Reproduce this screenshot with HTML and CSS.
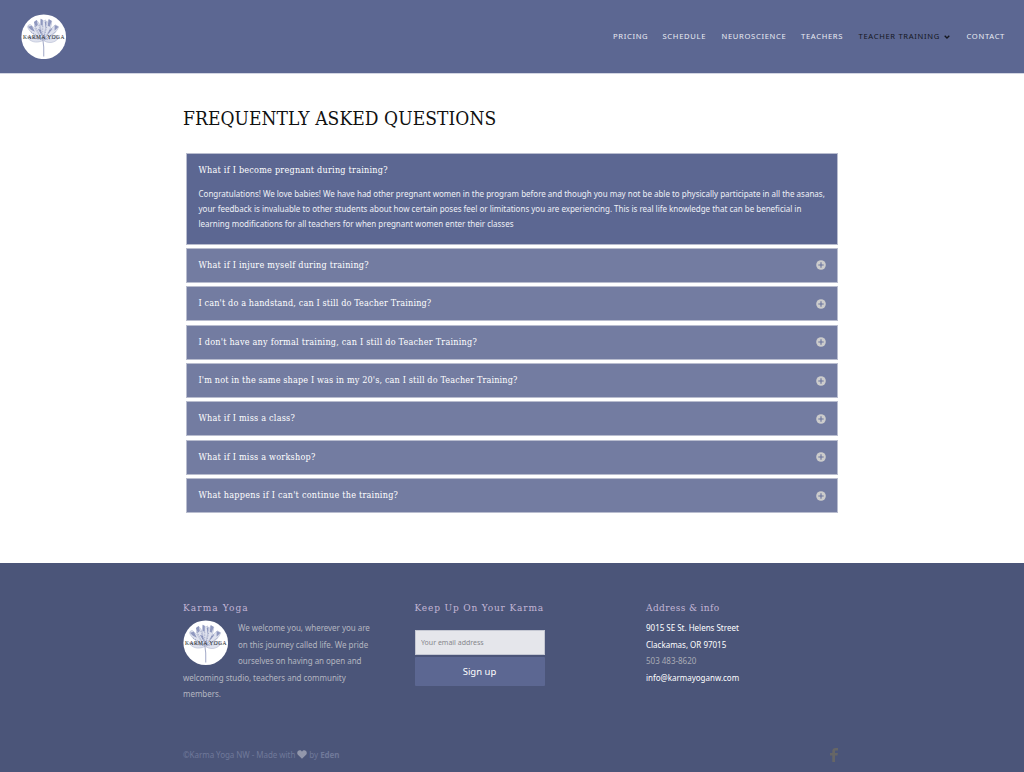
FILE: index.html
```
<!DOCTYPE html>
<html lang="en">
<head>
<meta charset="utf-8">
<title>Frequently Asked Questions - Karma Yoga</title>
<link rel="stylesheet" href="styles.css">
</head>
<body>
<svg class="defs" aria-hidden="true">
  <symbol id="lotus" viewBox="0 0 46 46">
    <circle cx="23" cy="23" r="22.600" fill="#fff"/>
    <g fill="#dfe2ee" stroke="#a6adca" stroke-width=".5">
      <path d="M22 27C16 23 9 19 7 14c-1-2 1-4 3-3 4 4 10 8 12 16z"/>
      <path d="M22 26C17 20 12 13 14 8c1-2 3-1 4 1 2 4 4 10 4 17z"/>
      <path d="M23 26C20 18 19 10 20 5l3 2 2-1c0 6 0 13-2 20z"/>
      <path d="M23 26c1-8 2-16 5-20l3 1c0 6-3 13-8 19z"/>
      <path d="M23 27c3-7 7-13 12-16l3 2c-2 6-8 10-15 14z"/>
      <path d="M22 27C15 30 9 28 6 23c6-1 12 0 16 4z"/>
      <path d="M23 27c5-5 12-7 16-4-3 5-9 8-16 4z"/>
    </g>
    <g fill="#8f98bf">
      <path d="M13 8l3-2 1 5-2 2zM20 5l2 1v6l-2-1zM28 5l3 2-2 6-2-1zM34 11l4 2-4 4zM7 13l4-1 3 6-4-2zM24 8l2-1-1 7zM17 15l3 1 1 6zM29 16l3-1-5 6z"/>
    </g>
    <path d="M14 12l7 13M18 11l4 13M22 12v13M26 13l-3 12M31 14l-7 11M10 18l11 7M35 18L24 26M9 24l12 2M37 24l-13 2" stroke="#717ba8" stroke-width=".5" stroke-dasharray="1.500 1" fill="none"/>
    <path d="M22 25q1.500 8 1 18" stroke="#a6adca" stroke-width="1.100" fill="none"/>
  </symbol>
  <symbol id="plus" viewBox="0 0 10 10">
    <circle cx="5" cy="5" r="4.800" fill="#ccc"/>
    <path d="M5 2.300v5.400M2.300 5h5.400" stroke="#68729c" stroke-width="1.100"/>
  </symbol>
</svg>

<header class="header">
  <svg class="logo" viewBox="0 0 46 46"><use href="#lotus" width="46" height="46"/><text x="2" y="25" textLength="42" class="logo-text">KARMA YOGA</text></svg>
  <nav class="nav">
    <a>PRICING</a><a>SCHEDULE</a><a>NEUROSCIENCE</a><a>TEACHERS</a>
    <a class="active">TEACHER TRAINING<svg class="chevron" viewBox="0 0 6 4"><path d="M.7.7L3 3 5.300.7" fill="none" stroke="currentColor" stroke-width="1.300"/></svg></a>
    <a>CONTACT</a>
  </nav>
</header>

<main class="main">
  <h1 class="title">FREQUENTLY ASKED QUESTIONS</h1>
  <div class="accordion">
    <section class="item open">
      <h2 class="question">What if I become pregnant during training?</h2>
      <p class="answer">Congratulations! We love babies! We have had other pregnant women in the program before and though you may not be able to physically participate in all the asanas,<br>your feedback is invaluable to other students about how certain poses feel or limitations you are experiencing. This is real life knowledge that can be beneficial in<br>learning modifications for all teachers for when pregnant women enter their classes</p>
    </section>
    <section class="item"><h2 class="question">What if I injure myself during training?</h2><svg class="plus"><use href="#plus"/></svg></section>
    <section class="item"><h2 class="question tight">I can't do a handstand, can I still do Teacher Training?</h2><svg class="plus"><use href="#plus"/></svg></section>
    <section class="item"><h2 class="question">I don't have any formal training, can I still do Teacher Training?</h2><svg class="plus"><use href="#plus"/></svg></section>
    <section class="item"><h2 class="question tight">I'm not in the same shape I was in my 20's, can I still do Teacher Training?</h2><svg class="plus"><use href="#plus"/></svg></section>
    <section class="item"><h2 class="question">What if I miss a class?</h2><svg class="plus"><use href="#plus"/></svg></section>
    <section class="item"><h2 class="question">What if I miss a workshop?</h2><svg class="plus"><use href="#plus"/></svg></section>
    <section class="item"><h2 class="question">What happens if I can't continue the training?</h2><svg class="plus"><use href="#plus"/></svg></section>
  </div>
</main>

<footer class="footer">
  <div class="columns">
    <div class="column">
      <h3 class="heading wide">Karma Yoga</h3>
      <svg class="badge" viewBox="0 0 46 46"><use href="#lotus" width="46" height="46"/><text x="2" y="25" textLength="42" class="logo-text">KARMA YOGA</text></svg>
      <p class="copy">We welcome you, wherever you are<br>on this journey called life. We pride<br>ourselves on having an open and<br>welcoming studio, teachers and community<br>members.</p>
    </div>
    <div class="column">
      <h3 class="heading">Keep Up On Your Karma</h3>
      <form class="signup">
        <input class="email" type="text" placeholder="Your email address">
        <button class="submit" type="button">Sign up</button>
      </form>
    </div>
    <div class="column">
      <h3 class="heading narrow">Address &amp; info</h3>
      <p class="copy address">9015 SE St. Helens Street<br>Clackamas, OR 97015<br><span class="phone">503 483-8620</span><br>info@karmayoganw.com</p>
    </div>
  </div>
  <div class="bottom">
    <p class="credit">©Karma Yoga NW - Made with <svg class="heart" viewBox="0 0 10 9"><path d="M5 8.700L.9 4.800C-.8 2.500 1 .3 2.700.3 4 .3 4.700 1 5 1.700 5.300 1 6 .3 7.300.3 9 .3 10.800 2.500 9.100 4.800z" fill="currentColor"/></svg> by <b>Eden</b></p>
    <svg class="facebook" viewBox="0 0 8 14"><path d="M2.300 14V7.600H0V5h2.300V3.300C2.300 1.200 3.500 0 5.500 0H8v2.500H6.200c-.9 0-1.200.4-1.200 1.200V5h2.900l-.4 2.600H5V14z" fill="#666"/></svg>
  </div>
</footer>
</body>
</html>
```
FILE: styles.css
```
* { box-sizing: border-box; }
body { margin: 0; background: #fff; font-family: "Noto Sans", sans-serif; font-size: 8px; color: #fff; }
h1, h2, h3, p { margin: 0; font-weight: 400; white-space: nowrap; }
.defs { display: block; width: 0; height: 0; }
.logo-text { font: 5.500px "Liberation Serif", serif; fill: #222; }

.header { display: flex; justify-content: space-between; align-items: center; height: 74px; padding: 0 18px 0 21px; background: #5c6792; border-bottom: 1px solid #d2d5e2; }
.logo { width: 45.500px; height: 45.500px; }
.nav { display: grid; grid-template-columns: 49.500px 59px 79.500px 57.500px 108px 39.500px; padding-bottom: 1.500px; font-size: 7.600px; line-height: 12px; letter-spacing: .68px; color: #e9ebf3; white-space: nowrap; }
.active { color: #15171f; }
.chevron { width: 6px; height: 4px; margin-left: 4px; }

.main { height: 489px; padding: 32px 186px 0; }
.title { margin-left: -3px; font: 19px/24px "DejaVu Serif Condensed", "DejaVu Serif", serif; letter-spacing: .08px; color: #111; }
.accordion { display: grid; gap: 3.400px; margin-top: 23px; }
.item { display: flex; justify-content: space-between; align-items: center; height: 35px; padding: 0 11.500px; background: #737ca1; border: 1px solid #b9bdcf; }
.open { display: block; height: 91.500px; padding-top: 10px; background: #5c6792; }
.question { font: 9px/13px "DejaVu Serif Condensed", "DejaVu Serif", serif; letter-spacing: .23px; }
.tight { letter-spacing: .15px; }
.answer { margin-top: 10.400px; line-height: 14.700px; letter-spacing: -.008px; color: #eef0f6; }
.plus { width: 10px; height: 10px; }

.footer { height: 209px; padding: 38px 186px 0 183px; background: #4b5579; }
.columns { display: grid; grid-template-columns: 188px 188px 188px; gap: 43.500px; height: 142.500px; }
.heading { font: 10px/14px "DejaVu Serif Condensed", "DejaVu Serif", serif; letter-spacing: .85px; color: #c3b5d6; }
.wide { letter-spacing: 1.100px; }
.narrow { letter-spacing: .4px; }
.badge { float: left; width: 45.500px; height: 45.500px; margin: 5px 9.500px 0 0; }
.copy { margin-top: 5px; line-height: 16.500px; letter-spacing: -.035px; color: #b4b6c0; }
.address { color: #fff; letter-spacing: -.01px; }
.phone { color: #a9abb5; }
.signup { display: grid; gap: 2px; width: 130px; margin-top: 15px; }
.email { width: 130px; height: 25px; padding: 0 5.500px; border: 1px solid #c4c7d2; background: #e5e6eb; font: 7px "Noto Sans", sans-serif; }
.email::placeholder { color: #85868c; opacity: 1; }
.submit { height: 29px; padding: 0; border: 0; border-radius: 1px; background: #5c6792; color: #fff; font: 9.500px "Noto Sans", sans-serif; }
.bottom { display: flex; justify-content: space-between; align-items: center; height: 22px; color: #707999; }
.credit { letter-spacing: -.05px; }
.heart { width: 10px; height: 9px; vertical-align: -1px; color: #9297ab; }
.facebook { width: 8px; height: 14px; }
```
